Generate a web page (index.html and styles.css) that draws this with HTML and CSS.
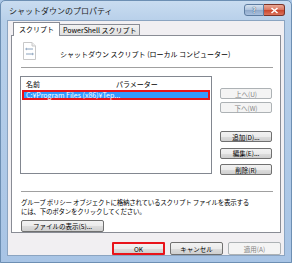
FILE: index.html
```html
<!DOCTYPE html>
<html lang="ja">
<head>
<meta charset="utf-8">
<link rel="stylesheet" href="styles.css">
</head>
<body>
<div class="frame">
  <div class="titlebar">
    <span class="title">シャットダウンのプロパティ</span>
    <div class="caps">
      <span class="cap help">?</span>
      <span class="cap close">
        <svg width="9" height="7" viewBox="0 0 9 7"><path d="M1.5 1 L7.5 6 M7.5 1 L1.5 6" stroke="#fff" stroke-width="1.6"/></svg>
      </span>
    </div>
  </div>
  <div class="client">
    <div class="tabs">
      <span class="tab active">スクリプト</span>
      <span class="tab">PowerShell スクリプト</span>
    </div>
    <div class="panel">
      <div class="head">
        <svg class="doc" width="13" height="18" viewBox="0 0 13 18">
          <path d="M0.5 0.5 H9 L12.5 4 V17.5 H0.5 Z" fill="#fff" stroke="#c8c8c8"/>
          <path d="M9 0.5 V4 H12.5" fill="#eee" stroke="#c8c8c8"/>
          <path d="M3 7 H10 M3 12 H10" stroke="#8aa2bd" stroke-width="1"/>
          <path d="M4 6 L2.5 7 L4 8 M9 11 L10.5 12 L9 13" stroke="#8aa2bd" fill="none" stroke-width="0.8"/>
        </svg>
        <span class="headtext">シャットダウン スクリプト (ローカル コンピューター)</span>
      </div>
      <div class="sep"></div>
      <div class="mid">
        <div class="list">
          <div class="lhead"><span class="c1">名前</span><span class="c2">パラメーター</span></div>
          <div class="row sel">C:¥Program Files (x86)¥Tep...</div>
        </div>
        <div class="side">
          <div class="group">
            <div class="btn dis">上へ(U)</div>
            <div class="btn dis">下へ(W)</div>
          </div>
          <div class="group lower">
            <div class="btn">追加(D)...</div>
            <div class="btn">編集(E)...</div>
            <div class="btn">削除(R)</div>
          </div>
        </div>
      </div>
      <div class="sep sep2"></div>
      <p class="desc">グループ ポリシー オブジェクトに格納されているスクリプト ファイルを表示する<br>には、下のボタンをクリックしてください。</p>
      <div class="btn files">ファイルの表示(S)...</div>
    </div>
    <div class="footer">
      <div class="btn fb ok">OK</div>
      <div class="btn fb">キャンセル</div>
      <div class="btn fb dis">適用(A)</div>
    </div>
  </div>
</div>
</body>
</html>
```
FILE: styles.css
```css
* { box-sizing: border-box; }
html, body { margin: 0; padding: 0; }
body {
  width: 292px; height: 263px; overflow: hidden;
  font-family: "Noto Sans CJK JP", "Noto Sans", sans-serif;
  font-size: 7px; color: #000;
  background: #aac6e6;
}
.frame {
  width: 292px; height: 263px;
  background: linear-gradient(180deg, #c9dcf0 0px, #b8d0ea 20px, #a8c4e5 100%);
  border: 1px solid #6d8fb3;
  border-radius: 5px 5px 0 0;
  padding: 0 6px 6px 6px;
  display: flex; flex-direction: column;
}
.titlebar {
  height: 20px; display: flex; align-items: center; justify-content: space-between;
}
.title { font-size: 8px; color: #1e1e1e; padding-left: 2px; }
.caps { display: flex; align-self: flex-start; margin-top: 3px; margin-right: 0; flex-shrink: 0; }
.cap {
  flex-shrink: 0;
  height: 12px; display: flex; align-items: center; justify-content: center;
  border: 1px solid #5d7ca0; font-size: 7px; font-weight: bold;
}
.help {
  width: 20px; border-radius: 3px 0 0 3px; color: #fff;
  background: linear-gradient(180deg, #d6e2ef 0, #adc2dc 50%, #8fa9ca 51%, #a9c0de 100%);
  text-shadow: 0 0 1px #2c4664, 0 0 1px #2c4664;
}
.close {
  width: 21px; border-radius: 0 3px 3px 0; border-left: none;
  background: linear-gradient(180deg, #eaa996 0, #d9735d 50%, #c8452c 51%, #dc745d 100%);
  border-color: #7b3328;
}
.client {
  flex: 1; background: #f1eff2; border: 1px solid #8ba4c1;
  padding: 0 3px 0 3px; display: flex; flex-direction: column;
}
.tabs { display: flex; align-items: flex-end; height: 14px; padding-left: 2px; }
.tab {
  height: 11px; padding: 0 3px; border: 1px solid #898c95; border-bottom: none;
  background: linear-gradient(#f2f2f2, #e0e0e0); font-size: 7px; line-height: 10px;
  margin-left: -1px;
}
.tab.active {
  height: 14px; background: #fff; padding: 0 5px; line-height: 13px; position: relative; z-index: 1;
  margin-bottom: -1px; margin-left: 0;
}
.panel {
  height: 198px; background: #fff; border: 1px solid #898c95; padding: 0 8px;
  display: flex; flex-direction: column;
}
.head { display: flex; align-items: center; height: 28px; padding-left: 3px; }
.doc { margin-top: 2px; }
.headtext { margin-left: 24px; margin-top: 7px; }
.sep { height: 2px; background: #a0a0a0; margin: 3px 0 0 1px; width: 252px; border-bottom: 1px solid #fff; }
.mid { display: flex; margin-top: 7px; gap: 8px; }
.list { width: 192px; height: 98px; border: 1px solid #828790; }
.lhead { display: flex; height: 13px; align-items: center; padding-top: 1px; }
.c1 { width: 92px; padding-left: 5px; }
.c2 { padding-left: 3px; }
.row { height: 10px; line-height: 7px; padding-left: 2px; font-size: 7px; }
.row.sel { background: #3399ff; color: #fff; border: 2px solid #e8141b; margin: 0 1px; }
.side { display: flex; flex-direction: column; padding-top: 12px; }
.group { display: flex; flex-direction: column; gap: 3px; }
.group.lower { margin-top: 18px; gap: 5.5px; }
.btn {
  width: 52px; height: 11px; border: 1px solid #707070; border-radius: 2px;
  background: linear-gradient(180deg, #f2f2f2 0, #ebebeb 50%, #dddddd 51%, #cfcfcf 100%);
  display: flex; align-items: center; justify-content: center; font-size: 6.5px; color: #000;
}
.btn.dis { border-color: #adb2b5; background: #f4f4f4; color: #838383; }
.sep2 { margin-top: 16px; }
.desc { margin: 5px 0 0 1px; line-height: 9px; font-size: 6.5px; white-space: nowrap; letter-spacing: -0.25px; }
.files { width: 83px; margin: 4px 0 0 1px; height: 12px; }
.footer { display: flex; justify-content: flex-end; gap: 5px; padding-top: 9px; padding-right: 0px; }
.fb { width: 53px; height: 13px; }
.ok { border: 2px solid #e8141b; border-radius: 1px; }
```
